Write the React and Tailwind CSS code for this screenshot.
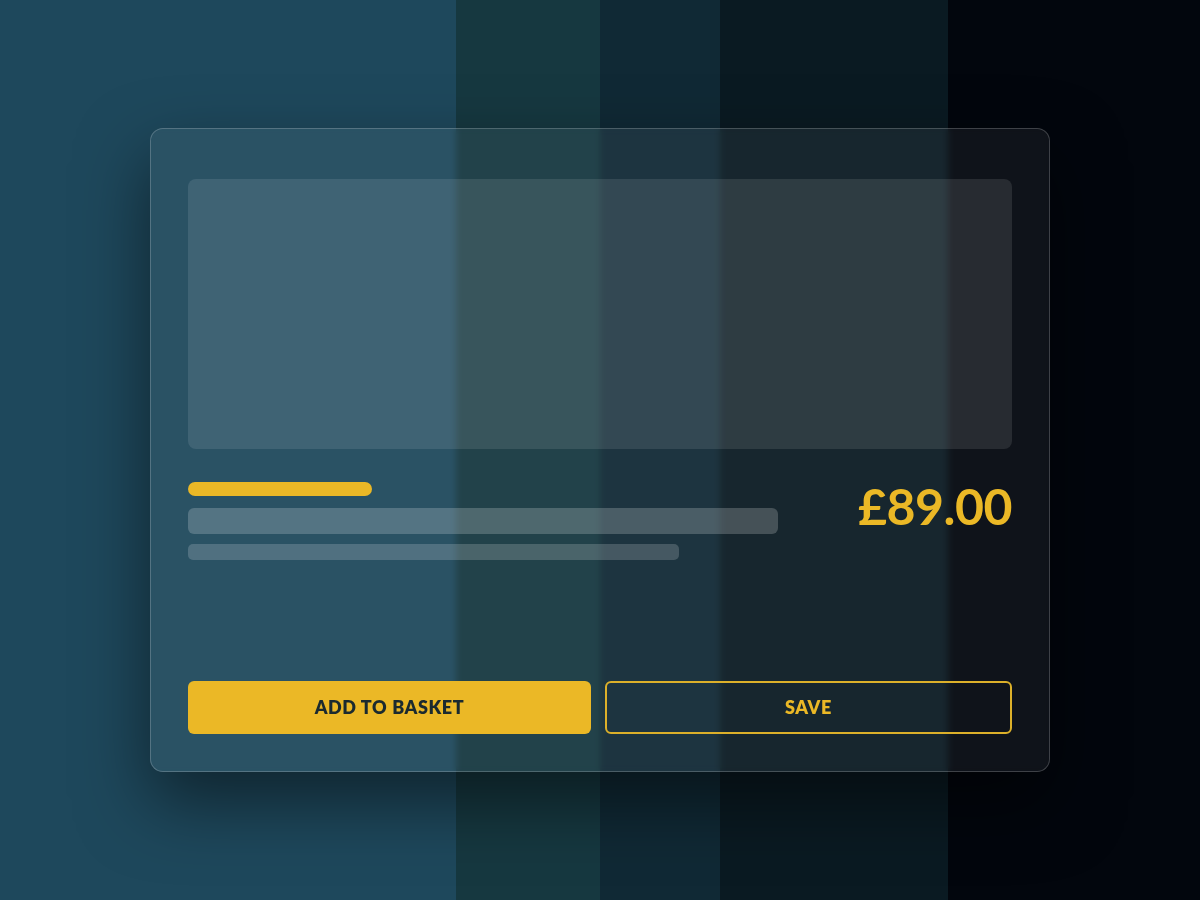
import React from 'react';

export default function App() {
    return (
        <div
            className="w-[1200px] h-[900px] flex items-center justify-center bg-[linear-gradient(90deg,#1e485c_0px,#1e485c_456px,#163840_456px,#163840_600px,#102935_600px,#102935_720px,#0a1a22_720px,#0a1a22_948px,#02060d_948px,#02060d_1200px)]"
            style={{ fontFamily: 'Lato, "Open Sans", sans-serif' }}
        >
            <div className="w-[900px] h-[644px] flex flex-col rounded-[13px] border border-white/20 bg-white/[0.055] backdrop-blur-[3px] shadow-[0_30px_70px_rgba(0,0,0,0.5)] px-[37px] pt-[50px] pb-[37px]">
                <div className="h-[270px] rounded-lg bg-white/[0.1]" />

                <div className="mt-[33px] flex justify-between items-start">
                    <div className="flex flex-col">
                        <div className="w-[184px] h-[14px] rounded-full bg-[#ebb826]" />
                        <div className="mt-[12px] w-[590px] h-[26px] rounded-md bg-white/[0.2]" />
                        <div className="mt-[10px] w-[491px] h-[16px] rounded-[5px] bg-white/[0.18]" />
                    </div>
                    <div className="text-[50px] leading-none font-bold text-[#ebb826] -mt-[1px] tracking-[-0.5px]">£89.00</div>
                </div>

                <div className="mt-auto flex gap-[14px]">
                    <button className="flex-1 h-[53px] rounded-md bg-[#ebb826] text-[#1b2a2f] text-[18px] font-extrabold tracking-[0.6px]">
                        ADD TO BASKET
                    </button>
                    <button className="flex-1 h-[53px] rounded-md border-2 border-[#dcb02a] text-[#ebb826] text-[18px] font-extrabold tracking-[0.6px]">
                        SAVE
                    </button>
                </div>
            </div>
        </div>
    );
}
